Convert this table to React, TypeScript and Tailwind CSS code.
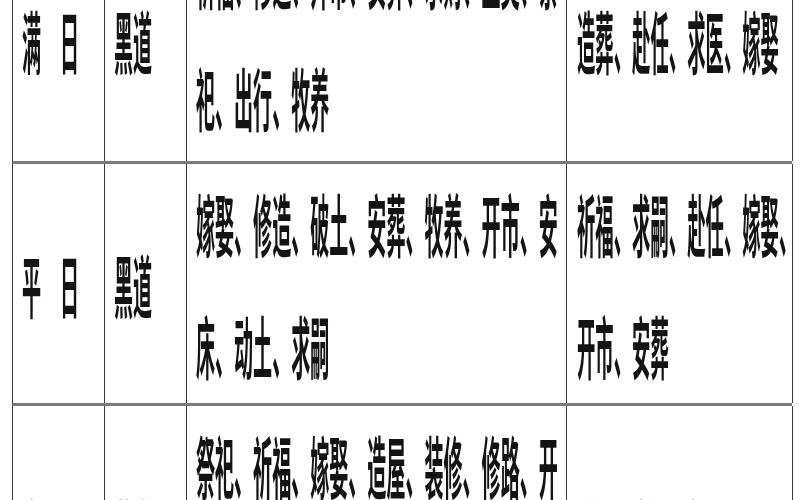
import React from 'react';

interface AlmanacRow {
  day: string;
  dao: string;
  yi: string[]; // 宜
  ji: string[]; // 忌
  shift?: string; // nudges for the one-line cells
  yiShift?: string;
}

const rows: AlmanacRow[] = [
  {
    day: '满　日',
    dao: '黑道',
    yi: ['祈福、修造、开市、安葬、求财、立契、祭', '祀、出行、牧养'],
    ji: ['造葬、赴任、求医、嫁娶'],
    shift: 'pb-[4px]',
    yiShift: 'pb-[12px]',
  },
  {
    day: '平　日',
    dao: '黑道',
    yi: ['嫁娶、修造、破土、安葬、牧养、开市、安', '床、动土、求嗣'],
    ji: ['祈福、求嗣、赴任、嫁娶、', '开市、安葬'],
  },
  {
    day: '定　日',
    dao: '黄道',
    yi: ['祭祀、祈福、嫁娶、造屋、装修、修路、开', '市、交易、立券'],
    ji: ['诉讼、出行、赴任'],
    shift: 'pt-[6px]',
  },
];

const FONT_PX = 68;

// the scan is squeezed sideways, so every line is drawn narrow and tall
const Line = ({ text, narrow }: { text: string; narrow?: boolean }) => {
  const s = narrow ? 0.27 : 0.28;
  return (
    <div className="h-[60px] leading-[60px] whitespace-nowrap">
      <span
        className={`inline-block origin-left text-[68px] font-semibold text-[#141414] ${
          narrow ? 'scale-x-[0.27]' : 'scale-x-[0.28]'
        }`}
        style={{ marginRight: -text.length * FONT_PX * (1 - s) }}
      >
        {text}
      </span>
    </div>
  );
};

const Cell = ({ lines, narrow, className = '' }: { lines: string[]; narrow?: boolean; className?: string }) => (
  <div className={`flex flex-col justify-center gap-[62px] border-r border-[#3a3a3a] pl-[9px] ${className}`}>
    {lines.map((l, i) => (
      <Line key={i} text={l} narrow={narrow} />
    ))}
  </div>
);

export default function App() {
  return (
    <div className="h-[500px] w-[800px] overflow-hidden bg-white font-['Noto_Sans_CJK_SC',sans-serif]">
      <div className="mt-[-78px] ml-[12px] w-[780px] blur-[0.6px]">
        {rows.map((row, i) => (
          <div
            key={i}
            className="grid h-[242px] grid-cols-[92px_82px_380px_226px] border-b-[3px] border-l border-b-[#7a7a7a] border-l-[#3a3a3a]"
          >
            <Cell lines={[row.day]} className={row.shift} />
            <Cell lines={[row.dao]} className={row.shift} />
            <Cell lines={row.yi} className={row.yiShift} />
            <Cell lines={row.ji} narrow className={`pl-[10px] ${row.shift ?? ''}`} />
          </div>
        ))}
      </div>
    </div>
  );
}
